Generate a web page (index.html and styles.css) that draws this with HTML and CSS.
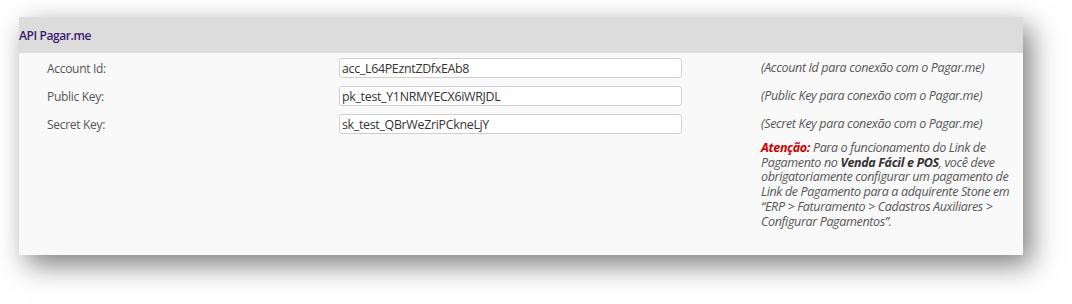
FILE: index.html
```html
<!DOCTYPE html>
<html lang="pt-BR">
<head>
<meta charset="utf-8">
<title>API Pagar.me</title>
<link rel="stylesheet" href="styles.css">
</head>
<body>
<div class="panel">
  <div class="panel-header">API Pagar.me</div>
  <div class="panel-body">
    <div class="label">Account Id:</div>
    <div class="field"><input class="input" type="text" value="acc_L64PEzntZDfxEAb8"></div>
    <div class="desc">(Account Id para conexão com o Pagar.me)</div>

    <div class="label">Public Key:</div>
    <div class="field"><input class="input" type="text" value="pk_test_Y1NRMYECX6iWRJDL"></div>
    <div class="desc">(Public Key para conexão com o Pagar.me)</div>

    <div class="label">Secret Key:</div>
    <div class="field"><input class="input" type="text" value="sk_test_QBrWeZriPCkneLjY"></div>
    <div class="desc">(Secret Key para conexão com o Pagar.me)</div>

    <div class="note"><strong class="warn">Atenção:</strong> Para o funcionamento do Link de Pagamento no <strong class="strong">Venda Fácil e POS</strong>, você deve obrigatoriamente configurar um pagamento de Link de Pagamento para a adquirente Stone em “ERP &gt; Faturamento &gt; Cadastros Auxiliares &gt; Configurar Pagamentos”.</div>
  </div>
</div>
</body>
</html>
```
FILE: styles.css
```css
html, body {
  margin: 0;
  padding: 0;
  background: #ffffff;
}
html {
  height: 100%;
}
body {
  box-sizing: border-box;
  min-height: 100%;
  padding: 17px 0 49px 19px;
  font-family: "Open Sans", "Noto Sans", sans-serif;
}
.panel {
  width: 1004px;
  height: 238px;
  background: #f9f9f9;
  box-shadow: 8px 10px 26px rgba(0, 0, 0, 0.5);
  display: flex;
  flex-direction: column;
}
.panel-header {
  flex: 0 0 36px;
  background: #dcdcdc;
  color: #3b1a70;
  font-size: 12px;
  font-weight: 600;
  letter-spacing: -0.4px;
  display: flex;
  align-items: center;
}
.panel-body {
  display: grid;
  grid-template-columns: 292px 422px 258px;
  grid-template-rows: 28px 28px 28px auto;
  padding: 5px 0 0 28px;
}
.label {
  font-size: 12px;
  color: #555555;
  letter-spacing: -0.3px;
  padding-top: 2px;
}
.field {
  display: flex;
}
.input {
  box-sizing: border-box;
  width: 343px;
  height: 20px;
  border: 1px solid #cfcfcf;
  border-radius: 3px;
  background: #ffffff;
  padding: 0 2px;
  margin: 0;
  font-family: "Open Sans", "Noto Sans", sans-serif;
  font-size: 12.4px;
  letter-spacing: -0.3px;
  color: #333333;
}
.desc {
  font-size: 12.5px;
  font-style: italic;
  color: #555555;
  letter-spacing: -0.35px;
  padding-top: 1px;
}
.note {
  grid-column: 3;
  grid-row: 4;
  font-size: 12.5px;
  font-style: italic;
  color: #555555;
  line-height: 14.7px;
  letter-spacing: -0.35px;
  margin-top: -1px;
}
.warn {
  color: #cc0000;
  font-weight: 700;
}
.strong {
  color: #333333;
  font-weight: 700;
}
```
